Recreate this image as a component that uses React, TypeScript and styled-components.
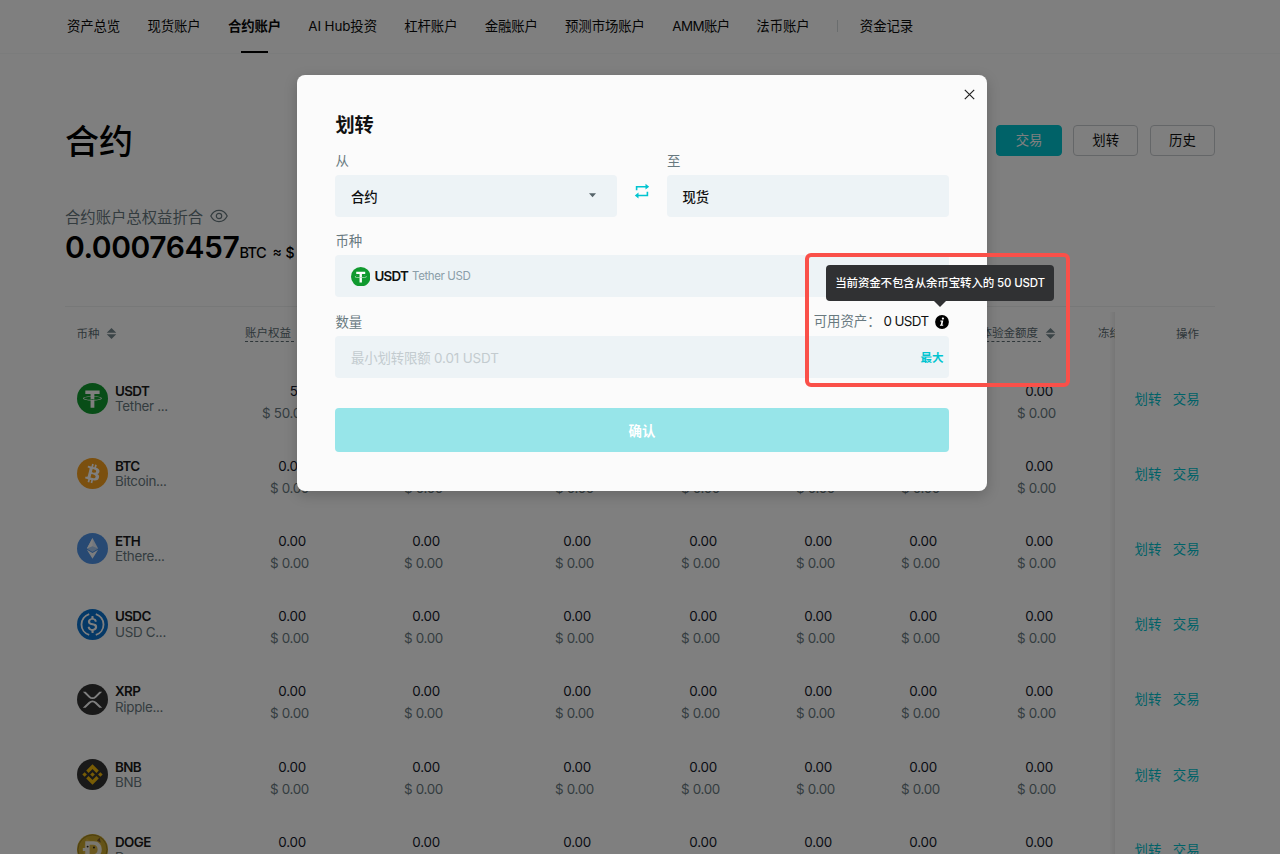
import React from 'react';
import styled, { createGlobalStyle, css } from 'styled-components';

const GlobalStyle = createGlobalStyle`
  *, *::before, *::after { box-sizing: border-box; }
  html, body { margin: 0; padding: 0; background: #fff; }
  body {
    width: 1280px;
    height: 854px;
    overflow: hidden;
    font-family: Inter, "Noto Sans CJK SC", sans-serif;
    font-size: 13.4px;
    color: #000;
  }
`;

/* ---------- page ---------- */

const Page = styled.div`
  position: relative;
  width: 1280px;
  height: 854px;
  overflow: hidden;
  background: #fff;
`;

const NavBar = styled.nav`
  display: flex;
  height: 54px;
  padding-left: 67px;
  border-bottom: 1px solid #f7f8f9;
`;

const NavItem = styled.a<{ $active?: boolean; $width: number; $track?: number }>`
  position: relative;
  width: ${(p) => p.$width}px;
  margin-right: 27px;
  line-height: 53px;
  white-space: nowrap;
  letter-spacing: ${(p) => p.$track ?? -0.1}px;
  font-weight: ${(p) => (p.$active ? 700 : 400)};
  color: #0a0a0a;
  ${(p) =>
    p.$active &&
    css`
      &::after {
        content: '';
        position: absolute;
        left: 13px;
        top: 50.5px;
        width: 27px;
        height: 2px;
        background: #000;
      }
    `}
`;

const NavDivider = styled.span`
  width: 1px;
  height: 12px;
  margin: 20px 22px 0 0;
  background: #d5dadd;
`;

const Main = styled.main`
  padding: 0 65px;
`;

const Header = styled.header`
  display: flex;
  justify-content: space-between;
  align-items: center;
  height: 48px;
  margin-top: 62.5px;
`;

const PageTitle = styled.h1`
  margin: 2px 0 0;
  font-size: 34px;
  line-height: 48px;
  font-weight: 500;
`;

const ButtonGroup = styled.div`
  display: flex;
  gap: 11.5px;
`;

const HeaderButton = styled.button<{ $primary?: boolean }>`
  width: 65.2px;
  height: 31px;
  padding: 0;
  border: 1px solid ${(p) => (p.$primary ? '#00c4d0' : '#c9cdd0')};
  border-radius: 4px;
  background: ${(p) => (p.$primary ? '#00c4d0' : 'transparent')};
  color: ${(p) => (p.$primary ? '#fff' : '#111')};
  font: inherit;
  line-height: 29px;
`;

const EquityLabel = styled.div`
  display: flex;
  align-items: center;
  gap: 6.5px;
  height: 22px;
  margin-top: 40.5px;
  font-size: 15.35px;
  color: #68797f;
`;

const Equity = styled.div`
  display: flex;
  align-items: baseline;
  height: 41px;
  line-height: 40px;
  font-weight: 600;
`;

const EquityAmount = styled.span`
  width: 174.5px;
  font-size: 30px;
  letter-spacing: -0.42px;
  white-space: nowrap;
`;

const EquityUnit = styled.span`
  width: 33px;
  font-size: 14.6px;
  font-weight: 500;
  letter-spacing: -0.7px;
`;

const EquityApprox = styled.span`
  font-size: 14px;
  font-weight: 500;
`;

/* ---------- table ---------- */

const columns = '180px 64px 134px 151px 126px 115px 105px 116px 59px 100px';

const Table = styled.section`
  margin-top: 38px;
  border-top: 1px solid #eef0f1;
`;

const TableHead = styled.div`
  display: grid;
  grid-template-columns: ${columns};
  align-items: start;
  height: 54px;
  font-size: 11.5px;
  color: #5d6d73;
`;

const HeadCell = styled.div<{ $start?: boolean }>`
  display: flex;
  align-items: center;
  justify-content: ${(p) => (p.$start ? 'flex-start' : 'flex-end')};
  gap: ${(p) => (p.$start ? 6 : 3.5)}px;
  height: ${(p) => (p.$start ? 51 : 53)}px;
  padding-left: ${(p) => (p.$start ? 11.5 : 0)}px;
  padding-right: ${(p) => (p.$start ? 0 : 0.5)}px;
  white-space: nowrap;

  svg {
    margin-top: ${(p) => (p.$start ? 1 : -1)}px;
  }
`;

const HintLabel = styled.span`
  padding-right: 3px;
  line-height: 15px;
  border-bottom: 1px dashed #5d6d73;
`;

const ClippedCell = styled.div`
  overflow: hidden;
  padding-left: 42px;
  line-height: 53px;
  white-space: nowrap;
`;

const ActionHead = styled.div`
  padding-right: 16px;
  line-height: 55px;
  text-align: right;
`;

const TableBody = styled.div`
  position: relative;
`;

const TableRow = styled.div`
  display: grid;
  grid-template-columns: ${columns};
  align-items: center;
  height: 75.2px;
`;

const CoinCell = styled.div`
  display: flex;
  align-items: center;
  gap: 7.5px;
  padding-left: 11.5px;
`;

const CoinText = styled.div`
  padding-top: 1px;
`;

const CoinName = styled.div`
  font-weight: 600;
  line-height: 15.5px;
  letter-spacing: -0.6px;
  color: #1a1a1a;
`;

const CoinSub = styled.div`
  line-height: 15.5px;
  letter-spacing: -0.3px;
  color: #68797f;
`;

const AmountCell = styled.div`
  padding-top: 6px;
  text-align: right;
  line-height: 22px;
  white-space: nowrap;
  letter-spacing: -0.3px;
  color: #14182b;
`;

const Amount = styled.div`
  padding-right: 3px;
  letter-spacing: -0.2px;
`;

const Fiat = styled.div`
  color: #68797f;
`;

const ActionCell = styled.div`
  grid-column: 10;
  display: flex;
  gap: 11.5px;
  padding: 0 0 2px 19.5px;
  color: #00c4d0;
`;

const StickyEdge = styled.div`
  position: absolute;
  top: 312px;
  bottom: 0;
  left: 1109px;
  width: 6px;
  background: linear-gradient(to right, rgba(0, 0, 0, 0), rgba(0, 0, 0, 0.07));
`;

/* ---------- transfer dialog ---------- */

const Overlay = styled.div`
  position: absolute;
  inset: 0;
  display: flex;
  align-items: flex-start;
  padding: 75px 0 0 297px;
  background: rgba(0, 0, 0, 0.5);
`;

const Dialog = styled.div`
  position: relative;
  width: 690px;
  height: 415.6px;
  padding: 38.4px;
  border-radius: 8px;
  background: #fbfbfb;
  box-shadow: 0 4px 14px rgba(0, 0, 0, 0.2);
`;

const CloseButton = styled.button`
  position: absolute;
  top: 14px;
  right: 12px;
  display: flex;
  padding: 0;
  border: 0;
  background: none;
`;

const DialogTitle = styled.h2`
  margin: 0 0 13.6px;
  padding-top: 1px;
  font-size: 19.2px;
  line-height: 23px;
  font-weight: 700;
  color: #111;
`;

const AccountRow = styled.div`
  display: grid;
  grid-template-columns: 281.6px 50px 281.6px;
`;

const Field = styled.div`
  margin-bottom: 14.5px;
`;

const FieldLabel = styled.div`
  display: flex;
  justify-content: space-between;
  height: 20px;
  margin-bottom: 4px;
  line-height: 21px;
  color: #68797f;
`;

const FieldBox = styled.div`
  display: flex;
  align-items: center;
  justify-content: space-between;
  height: 41.9px;
  padding: 0 20.5px 0 15.5px;
  border-radius: 4px;
  background: #edf3f6;
  font-weight: 500;
  color: #111;
`;

const AmountBox = styled(FieldBox)`
  padding-right: 5px;
`;

const SwapSlot = styled.div`
  display: flex;
  justify-content: center;
  padding-top: 32px;
`;

const CoinOption = styled.div`
  display: flex;
  align-items: center;
  gap: 4px;
  letter-spacing: -0.75px;
  font-weight: 600;
`;

const CoinFullName = styled.span`
  font-size: 11.5px;
  font-weight: 400;
  letter-spacing: -0.4px;
  color: #8b9ea9;
`;

const Placeholder = styled.span`
  font-weight: 400;
  letter-spacing: -0.13px;
  color: #c3cbcf;
`;

const MaxButton = styled.button`
  padding: 0;
  border: 0;
  background: none;
  font: inherit;
  font-size: 11.5px;
  font-weight: 700;
  color: #00c4d0;
`;

const Available = styled.span`
  display: flex;
  align-items: center;
`;

const AvailableValue = styled.span`
  width: 51px;
  margin-left: 3px;
  letter-spacing: -0.65px;
  white-space: nowrap;
  color: #111;
`;

const InfoAnchor = styled.span`
  position: relative;
  display: flex;
  margin-top: 1px;
`;

const Tooltip = styled.div`
  position: absolute;
  right: -105.5px;
  bottom: 28px;
  width: 228px;
  height: 36px;
  border-radius: 4px;
  background: #303133;
  color: #fff;
  font-size: 11.5px;
  font-weight: 500;
  line-height: 36px;
  text-align: center;
  white-space: nowrap;
  letter-spacing: -0.15px;

  &::after {
    content: '';
    position: absolute;
    left: 108px;
    top: 36px;
    border: 6px solid transparent;
    border-top-color: #303133;
    border-bottom-width: 0;
  }
`;

const ConfirmButton = styled.button`
  display: block;
  width: 100%;
  height: 44px;
  margin-top: 30.4px;
  padding: 0;
  border: 0;
  border-radius: 4px;
  background: #97e5e9;
  color: #fff;
  font: inherit;
  font-weight: 700;
`;

const HighlightFrame = styled.div`
  position: absolute;
  left: 805px;
  top: 253px;
  width: 265px;
  height: 134px;
  border: 4px solid #fa5049;
  border-radius: 6px;
`;

/* ---------- icons ---------- */

const Icon = styled.svg<{ $size: number }>`
  display: block;
  flex: none;
  width: ${(p) => p.$size}px;
  height: ${(p) => p.$size}px;
`;

type Symbol = 'USDT' | 'BTC' | 'ETH' | 'USDC' | 'XRP' | 'BNB' | 'DOGE';

const coinColor: Record<Symbol, string> = {
  USDT: '#109a2f',
  BTC: '#f7a01e',
  ETH: '#4f93e6',
  USDC: '#0a72cf',
  XRP: '#333333',
  BNB: '#333333',
  DOGE: '#c9a72c',
};

const coinArt: Record<Symbol, React.ReactNode> = {
  USDT: (
    <path
      fill="#fff"
      d="M17.922 17.383v-.002c-.11.008-.677.042-1.942.042-1.01 0-1.721-.03-1.971-.042v.003c-3.888-.171-6.79-.848-6.79-1.658 0-.809 2.902-1.486 6.79-1.66v2.644c.254.018.982.061 1.988.061 1.207 0 1.812-.05 1.925-.06v-2.643c3.88.173 6.775.85 6.775 1.658 0 .81-2.895 1.485-6.775 1.657m0-3.59v-2.366h5.414V7.819H8.595v3.608h5.414v2.365c-4.4.202-7.709 1.074-7.709 2.118 0 1.044 3.309 1.915 7.709 2.118v7.582h3.913v-7.584c4.393-.202 7.694-1.073 7.694-2.116 0-1.043-3.301-1.914-7.694-2.117"
    />
  ),
  BTC: (
    <path
      fill="#fff"
      d="M23.189 14.02c.314-2.096-1.283-3.223-3.465-3.975l.708-2.84-1.728-.43-.69 2.765c-.454-.114-.92-.22-1.385-.326l.695-2.783L15.596 6l-.708 2.839c-.376-.086-.746-.17-1.104-.26l.002-.009-2.384-.595-.46 1.846s1.283.294 1.256.312c.7.175.826.638.805 1.006l-.806 3.235c.048.012.11.03.18.057l-.183-.045-1.13 4.532c-.086.212-.303.531-.793.41.018.025-1.256-.313-1.256-.313l-.858 1.978 2.25.561c.418.105.828.215 1.231.318l-.715 2.872 1.727.43.708-2.84c.472.127.93.245 1.378.357l-.706 2.828 1.728.43.715-2.866c2.948.558 5.164.333 6.097-2.333.752-2.146-.037-3.385-1.588-4.192 1.13-.26 1.98-1.003 2.207-2.538zm-3.95 5.538c-.533 2.147-4.148.986-5.32.695l.95-3.805c1.172.293 4.929.872 4.37 3.11zm.535-5.569c-.487 1.953-3.495.96-4.47.717l.86-3.45c.975.243 4.118.696 3.61 2.733z"
    />
  ),
  ETH: (
    <>
      <path fill="#fff" fillOpacity=".85" d="M16 5.200 21.800 15.900 16 19.300 10.200 15.900Z" />
      <path fill="#fff" d="M16 5.200 10.200 15.900 16 13.600Z" />
      <path fill="#4f93e6" fillOpacity=".4" d="M16 13.600 21.800 15.900 16 19.300 10.200 15.900Z" />
      <path fill="#fff" fillOpacity=".95" d="M10.200 17.200 16 20.600 21.800 17.200 16 26.500Z" />
    </>
  ),
  USDC: (
    <>
      <path
        fill="#fff"
        d="M20.022 18.124c0-2.124-1.28-2.852-3.84-3.156-1.828-.243-2.193-.728-2.193-1.578 0-.85.61-1.396 1.828-1.396 1.097 0 1.707.364 2.011 1.275a.458.458 0 00.427.303h.975a.416.416 0 00.427-.425v-.06a3.04 3.04 0 00-2.743-2.489V9.142c0-.243-.183-.425-.487-.486h-.915c-.243 0-.426.182-.487.486v1.396c-1.829.242-2.986 1.456-2.986 2.974 0 2.002 1.218 2.791 3.778 3.095 1.707.303 2.255.668 2.255 1.639 0 .97-.853 1.638-2.011 1.638-1.585 0-2.133-.667-2.316-1.578-.06-.242-.244-.364-.427-.364h-1.036a.416.416 0 00-.426.425v.06c.243 1.518 1.219 2.61 3.23 2.914v1.457c0 .242.183.425.487.485h.915c.243 0 .426-.182.487-.485V21.34c1.829-.303 3.047-1.578 3.047-3.217z"
        transform="translate(-3.2 -3.2) scale(1.2)"
      />
      <path
        fill="none"
        stroke="#fff"
        strokeWidth="1.9"
        d="M12.6 5.2a11.3 11.3 0 0 0 0 21.6M19.4 5.2a11.3 11.3 0 0 1 0 21.6"
      />
    </>
  ),
  XRP: (
    <path
      fill="#fff"
      d="M23.07 8h2.89l-6.015 5.957a5.621 5.621 0 01-7.89 0L6.035 8H8.93l4.57 4.523a3.556 3.556 0 004.996 0L23.07 8zM8.895 24.563H6l6.055-5.993a5.621 5.621 0 017.89 0L26 24.562h-2.895L18.5 20a3.556 3.556 0 00-4.996 0l-4.61 4.563z"
    />
  ),
  BNB: (
    <path
      fill="#f0b90b"
      transform="translate(-.8 -.8) scale(1.05)"
      d="M12.116 14.404L16 10.52l3.886 3.886 2.26-2.26L16 6l-6.144 6.144 2.26 2.26zM6 16l2.26-2.26L10.52 16l-2.26 2.26L6 16zm6.116 1.596L16 21.48l3.886-3.886 2.26 2.259L16 26l-6.144-6.144-.003-.003 2.263-2.257zM21.48 16l2.26-2.26L26 16l-2.26 2.26L21.48 16zm-3.188-.002h.002V16L16 18.294l-2.291-2.29-.004-.004.004-.003.401-.402.195-.195L16 13.706l2.293 2.293z"
    />
  ),
  DOGE: (
    <>
      <circle cx="16" cy="16" r="15" fill="#c9a72c" stroke="#8a711d" strokeWidth=".8" />
      <path fill="#d8b23f" d="M8 10 10 4.5 14 7.5 20 7 23.5 3.5 25 10 26 18 20 26 10 26 6 18Z" />
      <path fill="#7b5a26" d="M20.5 6.8 23.4 3.6 24.6 9Z" />
      <path
        fill="#f5f0e2"
        fillRule="evenodd"
        d="M8.5 7.5H17c5 0 8.5 3.4 8.5 8.500s-3.500 8.500-8.500 8.500H8.500v-7H6v-3h2.500ZM13 11.200v9.600h3.500c3 0 4.800-1.800 4.800-4.800s-1.800-4.800-4.800-4.800Z"
      />
      <circle cx="11" cy="13" r="1" fill="#2c2417" />
      <circle cx="17.5" cy="14" r="1" fill="#2c2417" />
    </>
  ),
};

function CoinIcon({ symbol, size }: { symbol: Symbol; size: number }) {
  return (
    <Icon $size={size} viewBox="0 0 32 32">
      <circle cx="16" cy="16" r="16" fill={coinColor[symbol]} />
      {coinArt[symbol]}
    </Icon>
  );
}

function SortIcon() {
  return (
    <Icon $size={11} viewBox="0 0 11 11">
      <path fill="#77898f" d="M5.500 0 10.300 4.700H.7ZM5.500 11 .7 6.300h9.600Z" />
    </Icon>
  );
}

function EyeIcon() {
  return (
    <Icon $size={18} viewBox="0 0 18 18" fill="none" stroke="#68797f" strokeWidth="1.2">
      <path d="M.8 9C2.600 5.400 5.600 3.400 9 3.400S15.400 5.400 17.200 9C15.400 12.600 12.400 14.600 9 14.600S2.600 12.600.8 9Z" />
      <circle cx="9" cy="9" r="2.700" />
    </Icon>
  );
}

function SwapIcon() {
  return (
    <Icon $size={16} viewBox="0 0 16 16" fill="none" stroke="#00c4d0" strokeWidth="1.600">
      <path d="M2.600 7.300V3.700H12M13.400 8.700v3.800H4" />
      <path fill="#00c4d0" stroke="none" d="M11.500.8 15.200 3.700l-3.700 2.900ZM4.500 9.600.8 12.500l3.700 2.900Z" />
    </Icon>
  );
}

function CloseIcon() {
  return (
    <Icon $size={11} viewBox="0 0 11 11" fill="none" stroke="#222" strokeWidth="1.200">
      <path d="M.8.8l9.400 9.400M10.200.8l-9.400 9.400" />
    </Icon>
  );
}

function CaretIcon() {
  return (
    <Icon $size={7} viewBox="0 0 7 7">
      <path fill="#56646a" d="M0 1.300h7L3.500 5.300Z" />
    </Icon>
  );
}

function InfoIcon() {
  return (
    <Icon $size={14} viewBox="0 0 14 14">
      <circle cx="7" cy="7" r="6.900" fill="#000" />
      <circle cx="7.900" cy="3.600" r="1.100" fill="#fff" />
      <path
        fill="#fff"
        d="M5.400 5.500H8.300L7.400 9.700h.9l-.2 1.100H4.900l.2-1.100h.6l.7-3.100h-1.200z"
      />
    </Icon>
  );
}

/* ---------- data ---------- */

const nav = [
  { label: '资产总览', width: 53.5 },
  { label: '现货账户', width: 53.4 },
  { label: '合约账户', width: 53.4, active: true },
  { label: 'AI Hub投资', width: 69 },
  { label: '杠杆账户', width: 53.4 },
  { label: '金融账户', width: 53.4 },
  { label: '预测市场账户', width: 80.3 },
  { label: 'AMM账户', width: 57, track: -0.6 },
  { label: '法币账户', width: 53.5 },
];

const coins: { symbol: Symbol; name: string; equity: string }[] = [
  { symbol: 'USDT', name: 'Tether ...', equity: '50' },
  { symbol: 'BTC', name: 'Bitcoin...', equity: '0.00' },
  { symbol: 'ETH', name: 'Ethere...', equity: '0.00' },
  { symbol: 'USDC', name: 'USD C...', equity: '0.00' },
  { symbol: 'XRP', name: 'Ripple...', equity: '0.00' },
  { symbol: 'BNB', name: 'BNB', equity: '0.00' },
  { symbol: 'DOGE', name: 'Doge...', equity: '0.00' },
];

const restColumns = [0, 1, 2, 3, 4, 5];

function AmountPair({ value, fiat }: { value: string; fiat: string }) {
  return (
    <AmountCell>
      <Amount>{value}</Amount>
      <Fiat>$ {fiat}</Fiat>
    </AmountCell>
  );
}

function AssetsTable() {
  return (
    <Table>
      <TableHead>
        <HeadCell $start>
          币种
          <SortIcon />
        </HeadCell>
        <HeadCell>
          <HintLabel>账户权益</HintLabel>
          <SortIcon />
        </HeadCell>
        <HeadCell />
        <HeadCell />
        <HeadCell />
        <HeadCell />
        <HeadCell />
        <HeadCell>
          <HintLabel>体验金额度</HintLabel>
          <SortIcon />
        </HeadCell>
        <ClippedCell>冻结</ClippedCell>
        <ActionHead>操作</ActionHead>
      </TableHead>
      <TableBody>
        {coins.map((coin) => (
          <TableRow key={coin.symbol}>
            <CoinCell>
              <CoinIcon symbol={coin.symbol} size={31} />
              <CoinText>
                <CoinName>{coin.symbol}</CoinName>
                <CoinSub>{coin.name}</CoinSub>
              </CoinText>
            </CoinCell>
            <AmountPair value={coin.equity} fiat={coin.equity === '50' ? '50.00' : '0.00'} />
            {restColumns.map((i) => (
              <AmountPair key={i} value="0.00" fiat="0.00" />
            ))}
            <ActionCell>
              <span>划转</span>
              <span>交易</span>
            </ActionCell>
          </TableRow>
        ))}
      </TableBody>
    </Table>
  );
}

function TransferDialog() {
  return (
    <Dialog>
      <CloseButton aria-label="close">
        <CloseIcon />
      </CloseButton>
      <DialogTitle>划转</DialogTitle>
      <AccountRow>
        <Field>
          <FieldLabel>从</FieldLabel>
          <FieldBox>
            合约
            <CaretIcon />
          </FieldBox>
        </Field>
        <SwapSlot>
          <SwapIcon />
        </SwapSlot>
        <Field>
          <FieldLabel>至</FieldLabel>
          <FieldBox>现货</FieldBox>
        </Field>
      </AccountRow>
      <Field>
        <FieldLabel>币种</FieldLabel>
        <FieldBox>
          <CoinOption>
            <CoinIcon symbol="USDT" size={19.5} />
            USDT
            <CoinFullName>Tether USD</CoinFullName>
          </CoinOption>
        </FieldBox>
      </Field>
      <FieldLabel>
        数量
        <Available>
          可用资产：
          <AvailableValue>0 USDT</AvailableValue>
          <InfoAnchor>
            <InfoIcon />
            <Tooltip>当前资金不包含从余币宝转入的 50 USDT</Tooltip>
          </InfoAnchor>
        </Available>
      </FieldLabel>
      <AmountBox>
        <Placeholder>最小划转限额 0.01 USDT</Placeholder>
        <MaxButton>最大</MaxButton>
      </AmountBox>
      <ConfirmButton>确认</ConfirmButton>
    </Dialog>
  );
}

export default function App() {
  return (
    <Page>
      <GlobalStyle />
      <NavBar>
        {nav.map((item) => (
          <NavItem key={item.label} $width={item.width} $active={item.active} $track={item.track}>
            {item.label}
          </NavItem>
        ))}
        <NavDivider />
        <NavItem $width={53.5}>资金记录</NavItem>
      </NavBar>
      <Main>
        <Header>
          <PageTitle>合约</PageTitle>
          <ButtonGroup>
            <HeaderButton $primary>交易</HeaderButton>
            <HeaderButton>划转</HeaderButton>
            <HeaderButton>历史</HeaderButton>
          </ButtonGroup>
        </Header>
        <EquityLabel>
          合约账户总权益折合
          <EyeIcon />
        </EquityLabel>
        <Equity>
          <EquityAmount>0.00076457</EquityAmount>
          <EquityUnit>BTC</EquityUnit>
          <EquityApprox>≈ $</EquityApprox>
        </Equity>
        <AssetsTable />
      </Main>
      <StickyEdge />
      <Overlay>
        <TransferDialog />
      </Overlay>
      <HighlightFrame />
    </Page>
  );
}
